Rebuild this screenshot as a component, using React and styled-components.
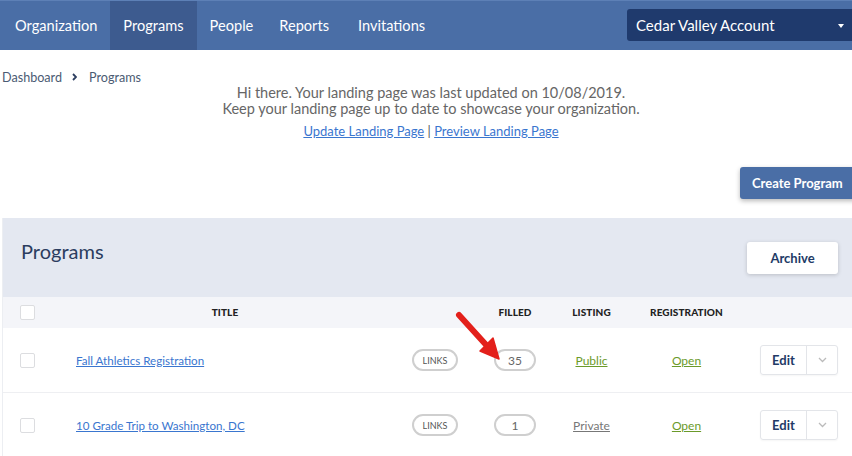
import React from "react";
import styled, { createGlobalStyle } from "styled-components";

const Global = createGlobalStyle`
  html, body { margin: 0; padding: 0; overflow: hidden; background: #fff; }
  body { font-family: Lato, "Open Sans", Arial, sans-serif; color: #333; }
`;

const Page = styled.div`
  position: relative;
  width: 860px;
`;

const Nav = styled.nav`
  height: 50px;
  background: #4a6ea6;
  border-top: 1px solid #5d80b6;
  box-sizing: border-box;
  display: flex;
  align-items: stretch;
  padding-left: 2px;
`;

const NavItem = styled.a`
  display: flex;
  align-items: center;
  padding: 0 13px 1px;
  margin-left: ${(p) => p.$extra || "0"};
  color: #fff;
  font-size: 14.6px;
  text-decoration: none;
  background: ${(p) => (p.$active ? "#3d5b8f" : "transparent")};
`;

const Spacer = styled.div`
  flex: 1;
`;

const Account = styled.div`
  align-self: center;
  width: 233px;
  height: 32px;
  margin-top: -1px;
  box-sizing: border-box;
  background: #1f3a6d;
  border-radius: 3px 0 0 3px;
  display: flex;
  align-items: center;
  justify-content: space-between;
  padding: 0 16px 0 9px;
  color: #fff;
  font-size: 15px;
`;

const Caret = styled.span`
  width: 0;
  height: 0;
  border-left: 3.5px solid transparent;
  border-right: 3.5px solid transparent;
  border-top: 4px solid #fff;
  margin-top: 2px;
`;

const Main = styled.main`
  padding: 0 0 0 2px;
`;

const Crumbs = styled.div`
  margin-top: 18px;
  height: 18px;
  display: flex;
  align-items: center;
  font-size: 12.6px;
  color: #4b5b73;
`;

const CrumbSep = styled.svg`
  margin: 0 12px 0 10px;
`;

const Notice = styled.div`
  text-align: center;
  font-size: 14.5px;
  line-height: 16px;
  color: #666;
  margin-top: -1px;
`;

const NoticeLinks = styled.div`
  text-align: center;
  margin-top: 6px;
  font-size: 13px;
  line-height: 16px;
  color: #555;
`;

const TextLink = styled.a`
  color: ${(p) => p.$color || "#3a76cf"};
  text-decoration: underline;
  font-size: ${(p) => p.$size || "inherit"};
`;

const Actions = styled.div`
  display: flex;
  justify-content: flex-end;
  margin-top: 28px;
  padding-right: 2px;
`;

const PrimaryButton = styled.button`
  width: 118px;
  height: 32px;
  border: none;
  border-radius: 3px 0 0 3px;
  background: #4a6ea6;
  color: #fff;
  font-family: inherit;
  font-weight: 700;
  font-size: 13px;
  box-shadow: 0 2px 5px rgba(0, 0, 0, 0.28);
  text-align: left;
  padding: 0 0 0 12px;
`;

const Panel = styled.section`
  margin-top: 19px;
  border-left: 1px solid #eceef2;
`;

const PanelHeader = styled.div`
  height: 79px;
  background: #e4e8f1;
  display: flex;
  align-items: center;
  justify-content: space-between;
  padding: 0 22px 0 18px;
`;

const PanelTitle = styled.h2`
  margin: 0 0 14px;
  font-weight: 400;
  font-size: 20px;
  color: #2b3d5f;
`;

const WhiteButton = styled.button`
  width: 91px;
  height: 32px;
  border: none;
  border-radius: 3px;
  background: #fff;
  color: #223a66;
  font-family: inherit;
  font-weight: 700;
  font-size: 13px;
  box-shadow: 0 1px 4px rgba(0, 0, 0, 0.18);
`;

const Row = styled.div`
  display: grid;
  grid-template-columns: 52px 340px 80px 80px 73px 117px 1fr;
  align-items: center;
  height: ${(p) => (p.$head ? "31px" : "65px")};
  background: ${(p) => (p.$head ? "#f4f5f9" : "#fff")};
  border-bottom: ${(p) => (p.$head ? "none" : "1px solid #eeeff2")};
  box-sizing: border-box;
`;

const HeadCell = styled.div`
  text-align: center;
  font-size: 10px;
  font-weight: 900;
  color: #222;
  letter-spacing: 0.1px;
  margin-top: -1px;
`;

const Cell = styled.div`
  display: flex;
  align-items: center;
  justify-content: ${(p) => p.$align || "center"};
  padding-left: ${(p) => p.$pl || "0"};
`;

const Checkbox = styled.span`
  display: block;
  width: 13px;
  height: 13px;
  border: 1px solid #dcdde0;
  border-radius: 2px;
  background: #fff;
  margin-left: 17px;
`;

const Pill = styled.span`
  box-sizing: border-box;
  height: 22px;
  width: ${(p) => p.$w};
  border: 2px solid #cfcfcf;
  border-radius: 11px;
  display: flex;
  align-items: center;
  justify-content: center;
  color: ${(p) => (p.$small ? "#555" : "#666")};
  font-size: ${(p) => (p.$small ? "9px" : "12px")};
`;

const EditGroup = styled.div`
  margin-left: 15px;
  display: flex;
  height: 30px;
  width: 78px;
  border: 1px solid #e3e5e9;
  border-radius: 3px;
  box-sizing: border-box;
  box-shadow: 0 1px 2px rgba(0, 0, 0, 0.04);
`;

const EditLabel = styled.span`
  width: 45px;
  display: flex;
  align-items: center;
  justify-content: center;
  font-weight: 700;
  font-size: 13px;
  color: #223a66;
  border-right: 1px solid #e3e5e9;
`;

const EditMenu = styled.span`
  flex: 1;
  display: flex;
  align-items: center;
  justify-content: center;
`;

const ArrowOverlay = styled.svg`
  position: absolute;
  left: 0;
  top: 0;
  pointer-events: none;
`;

const programs = [
  { title: "Fall Athletics Registration", filled: 35, listing: "Public" },
  { title: "10 Grade Trip to Washington, DC", filled: 1, listing: "Private" },
];

export default function App() {
  return (
    <Page>
      <Global />
      <Nav>
        <NavItem>Organization</NavItem>
        <NavItem $active>Programs</NavItem>
        <NavItem>People</NavItem>
        <NavItem>Reports</NavItem>
        <NavItem $extra="3px">Invitations</NavItem>
        <Spacer />
        <Account>
          <span>Cedar Valley Account</span>
          <Caret />
        </Account>
      </Nav>
      <Main>
        <Crumbs>
          <span>Dashboard</span>
          <CrumbSep width="5" height="8" viewBox="0 0 5 8">
            <path d="M1 1l3 3-3 3" fill="none" stroke="#2c3e60" strokeWidth="1.8" />
          </CrumbSep>
          <span>Programs</span>
        </Crumbs>
        <Notice>
          Hi there. Your landing page was last updated on 10/08/2019.
          <br />
          Keep your landing page up to date to showcase your organization.
        </Notice>
        <NoticeLinks>
          <TextLink>Update Landing Page</TextLink> | <TextLink>Preview Landing Page</TextLink>
        </NoticeLinks>
        <Actions>
          <PrimaryButton>Create Program</PrimaryButton>
        </Actions>
        <Panel>
          <PanelHeader>
            <PanelTitle>Programs</PanelTitle>
            <WhiteButton>Archive</WhiteButton>
          </PanelHeader>
          <Row $head>
            <Cell $align="flex-start">
              <Checkbox />
            </Cell>
            <HeadCell>TITLE</HeadCell>
            <HeadCell />
            <HeadCell>FILLED</HeadCell>
            <HeadCell>LISTING</HeadCell>
            <HeadCell>REGISTRATION</HeadCell>
            <HeadCell />
          </Row>
          {programs.map((p) => (
            <Row key={p.title}>
              <Cell $align="flex-start">
                <Checkbox />
              </Cell>
              <Cell $align="flex-start" $pl="21px">
                <TextLink $size="11.6px">{p.title}</TextLink>
              </Cell>
              <Cell>
                <Pill $w="46px" $small>LINKS</Pill>
              </Cell>
              <Cell>
                <Pill $w="42px">{p.filled}</Pill>
              </Cell>
              <Cell>
                <TextLink $size="12px" $color={p.listing === "Public" ? "#6b9a2a" : "#777"}>
                  {p.listing}
                </TextLink>
              </Cell>
              <Cell>
                <TextLink $size="12px" $color="#6b9a2a">Open</TextLink>
              </Cell>
              <Cell $align="flex-start">
                <EditGroup>
                  <EditLabel>Edit</EditLabel>
                  <EditMenu>
                    <svg width="9" height="6" viewBox="0 0 9 6">
                      <path d="M1 1l3.5 3.5L8 1" fill="none" stroke="#bbb" strokeWidth="1.3" />
                    </svg>
                  </EditMenu>
                </EditGroup>
              </Cell>
            </Row>
          ))}
        </Panel>
      </Main>
      <ArrowOverlay width="860" height="456" viewBox="0 0 860 456">
        <line x1="459" y1="315" x2="488" y2="347" stroke="#e3201b" strokeWidth="6" strokeLinecap="round" />
        <polygon points="499,359 480,351 493,338" fill="#e3201b" stroke="#e3201b" strokeWidth="1.5" strokeLinejoin="round" />
      </ArrowOverlay>
    </Page>
  );
}
